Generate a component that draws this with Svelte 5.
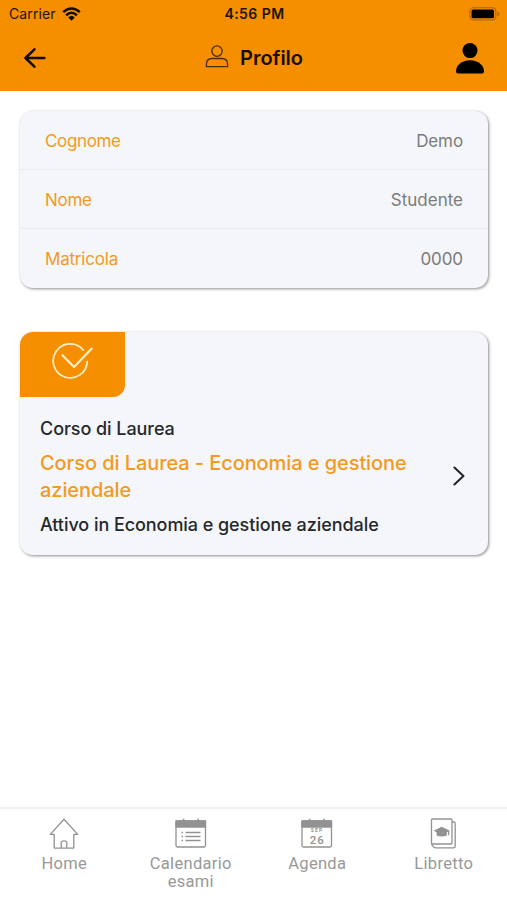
<script>
  const details = [
    { label: 'Cognome', value: 'Demo', ls: -0.35, vs: -0.1 },
    { label: 'Nome', value: 'Studente', ls: -0.3, vs: 0 },
    { label: 'Matricola', value: '0000', ls: -0.2, vs: -0.1 },
  ];
  const tabs = [
    { id: 'home', label: 'Home' },
    { id: 'exams', label: 'Calendario esami' },
    { id: 'agenda', label: 'Agenda' },
    { id: 'book', label: 'Libretto' },
  ];
</script>

<div class="screen">
  <header>
    <div class="status">
      <div class="carrier">
        <span>Carrier</span>
        <svg width="19" height="14" viewBox="0 0 19 14" fill="none" stroke="#120c00" stroke-width="2.5">
          <path d="M1.2 5.1Q9.5-2.2 17.8 5.1M4.1 8.2Q9.5 3.3 14.9 8.2" />
          <path d="M6.3 10.4Q9.5 7.3 12.7 10.4L9.5 13.7Z" fill="#120c00" stroke="none" />
        </svg>
      </div>
      <strong>4:56 PM</strong>
      <svg class="battery" width="31" height="14" viewBox="0 0 31 14">
        <rect x=".8" y=".8" width="26" height="12.2" rx="3.5" fill="none" stroke="#a96507" stroke-width="1.1" />
        <rect x="2.5" y="2.5" width="22.5" height="8.8" rx="1.6" />
        <path d="M28.3 4.6Q30.5 5.2 30.5 7T28.3 9.3Z" fill="#bd6504" />
      </svg>
    </div>
    <div class="bar">
      <svg class="back" width="22" height="20" viewBox="0 0 22 20" fill="none" stroke="#110b00" stroke-width="2.5" stroke-linecap="round" stroke-linejoin="round">
        <path d="M10.4 1.3 1.5 10l8.9 8.7M1.8 10h18.6" />
      </svg>
      <div class="title">
        <svg width="24" height="23" viewBox="0 0 24 23" fill="none" stroke="#4b2b00" stroke-width="1.3">
          <circle cx="12" cy="6.1" r="5.2" />
          <path d="M1.4 21.7v-2.4c0-4 2.5-5.8 6-5.8h9.2c3.5 0 6 1.8 6 5.8v2.4Z" stroke-linejoin="round" />
        </svg>
        <h1>Profilo</h1>
      </div>
      <svg class="user" width="28" height="31" viewBox="0 0 28 31">
        <circle cx="14" cy="7.6" r="7.5" />
        <path d="M2 30.5Q0 30.5 0 28.5C0 22.5 5.5 17.2 14 17.2s14 5.3 14 11.3q0 2-2 2Z" />
      </svg>
    </div>
  </header>

  <main>
    <dl class="card">
      {#each details as row}
        <div class="row">
          <dt style:letter-spacing="{row.ls}px">{row.label}</dt>
          <dd style:letter-spacing="{row.vs}px">{row.value}</dd>
        </div>
      {/each}
    </dl>

    <section class="card course">
      <div class="badge">
        <svg width="42" height="37" viewBox="0 0 42 37" fill="none" stroke="#fff1cf" stroke-linecap="round" stroke-linejoin="round">
          <path d="M31.4 8.2A17 17 0 1 0 35.2 19.6" stroke-width="1.7" />
          <path d="M10.5 13.2 22 24.9 39.8 6.5" stroke-width="2.1" />
        </svg>
      </div>
      <div class="body">
        <div class="copy">
          <p class="kind">Corso di Laurea</p>
          <h2>Corso di Laurea - Economia e gestione aziendale</h2>
          <p class="state">Attivo in Economia e gestione aziendale</p>
        </div>
        <svg class="chevron" width="12" height="20" viewBox="0 0 12 20" fill="none" stroke="#222529" stroke-width="2.1" stroke-linecap="round" stroke-linejoin="round">
          <path d="m1.4 1.5 9 8.5-9 8.5" />
        </svg>
      </div>
    </section>
  </main>

  <nav>
    {#each tabs as tab}
      <div class="tab">
        <svg width="32" height="32" viewBox="0 0 32 32" fill="none" stroke="#929292" stroke-width="1.3">
          {#if tab.id === 'home'}
            <path d="M16 1.2 2.3 16.4h3.9v13.7h19.6V16.4h3.9Z" stroke-linejoin="round" />
            <path d="M13.2 30v-5.2q0-2 2.8-2t2.8 2V30" />
          {:else if tab.id === 'book'}
            <rect x="3.5" y="1" width="20.5" height="25" rx="1" />
            <path d="M24 4h1.8q1.4 0 1.4 1.4v22.8q0 1.6-1.6 1.6H8Q5.3 29.8 3.5 26" />
            <path d="m5.6 12.7 8.1-4 8.2 4-8.2 4Z" fill="#929292" stroke="none" />
            <path d="M8.6 13.2v4.3q5.1 2 10.2 0v-4.3Z" fill="#929292" stroke="none" />
            <path d="M20.6 13v4.2" />
          {:else}
            <rect x="1" y="3" width="29.5" height="26" rx="1.4" />
            <path d="M1 3h29.5v6H1Z" fill="#929292" />
            <path d="M8.6 .8v3M23 .8v3" stroke-width="1.6" />
            {#if tab.id === 'exams'}
              <path d="M10.5 14.5h15M10.5 18.5h15M10.5 22.5h15" />
              <path d="M6.5 14.5h1.6M6.5 18.5h1.6M6.5 22.5h1.6" stroke-width="1.5" />
            {:else}
              <text x="16" y="14.4" class="month">SEP</text>
              <text x="16.3" y="25.7" class="day">26</text>
            {/if}
          {/if}
        </svg>
        <span>{tab.label}</span>
      </div>
    {/each}
  </nav>
</div>

<style>
  :global(body) { margin: 0; background: #fff; }
  .screen {
    display: flex;
    flex-direction: column;
    box-sizing: border-box;
    width: 100%;
    height: 900px;
    overflow: hidden;
    background: #fff;
    font-family: Inter, "Liberation Sans", sans-serif;
  }
  svg { display: block; flex: none; }
  h1, h2, p, dl, dd { margin: 0; }
  header { height: 91px; flex: none; background: #f58f00; }
  .status {
    display: grid;
    grid-template-columns: 1fr auto 1fr;
    height: 27px;
    align-items: center;
    padding: 0 7px 0 9px;
    color: #201400;
    font-size: 14px;
    line-height: 18px;
  }
  .carrier { display: flex; gap: 6px; align-items: center; }
  .carrier span { letter-spacing: .12px; }
  .status strong { font-size: 14px; font-weight: 600; letter-spacing: .45px; }
  .battery { justify-self: end; }
  .bar {
    display: grid;
    grid-template-columns: 1fr auto 1fr;
    align-items: center;
    height: 62px;
    padding: 0 23px 0 24px;
  }
  .title { display: flex; align-items: center; gap: 11px; }
  .title svg { margin-top: -3px; }
  h1 { font-size: 20px; line-height: 26px; font-weight: 600; color: #160e00; letter-spacing: -.05px; }
  .user { justify-self: end; }
  main { flex: 1; padding: 20px 19px 0 20px; }
  .card {
    background: #f4f6fa;
    border-radius: 13px;
    box-shadow: 1px 1px 3px rgba(0, 0, 0, .45);
  }
  .row {
    display: flex;
    align-items: center;
    justify-content: space-between;
    box-sizing: border-box;
    height: 59px;
    padding: 2px 25px 0;
    border-bottom: 1px solid #e9edf0;
    font-size: 17px;
  }
  .row:last-child { padding-top: 0; border-bottom: 0; }
  dt { color: #f29a22; }
  dd { color: #7b7b7b; }
  .course { height: 223px; margin-top: 44px; }
  .badge {
    box-sizing: border-box;
    width: 105px;
    height: 65px;
    padding: 10px 0 0 32px;
    background: #f58f00;
    border-radius: 13px 0 12px 0;
  }
  .body {
    display: flex;
    align-items: center;
    justify-content: space-between;
    padding: 19px 23px 0 20px;
  }
  .chevron { margin-bottom: 3px; }
  .copy { width: 382px; color: #25282b; }
  .kind, .state { font-size: 18px; line-height: 26px; font-weight: 500; letter-spacing: -.06px; white-space: nowrap; }
  h2 { margin: 8px 0; font-size: 20px; line-height: 27px; font-weight: 500; letter-spacing: -.08px; color: #f29a22; }
  nav {
    display: flex;
    flex: none;
    box-sizing: border-box;
    height: 93px;
    padding: 9px 0 0 1px;
    border-top: 2px solid #f1f1f1;
  }
  .tab {
    display: flex;
    flex: 1;
    flex-direction: column;
    align-items: center;
    color: #989898;
    font: 16.5px/18px Roboto, "Liberation Sans", sans-serif;
    text-align: center;
  }
  .tab span { width: 90px; margin-top: 5px; letter-spacing: .3px; }
  text { fill: #929292; stroke: none; text-anchor: middle; font-family: Roboto, sans-serif; }
  .month { font-size: 5px; font-weight: 700; letter-spacing: 1.2px; }
  .day { font-size: 11.5px; font-weight: 500; letter-spacing: 1px; }
</style>
